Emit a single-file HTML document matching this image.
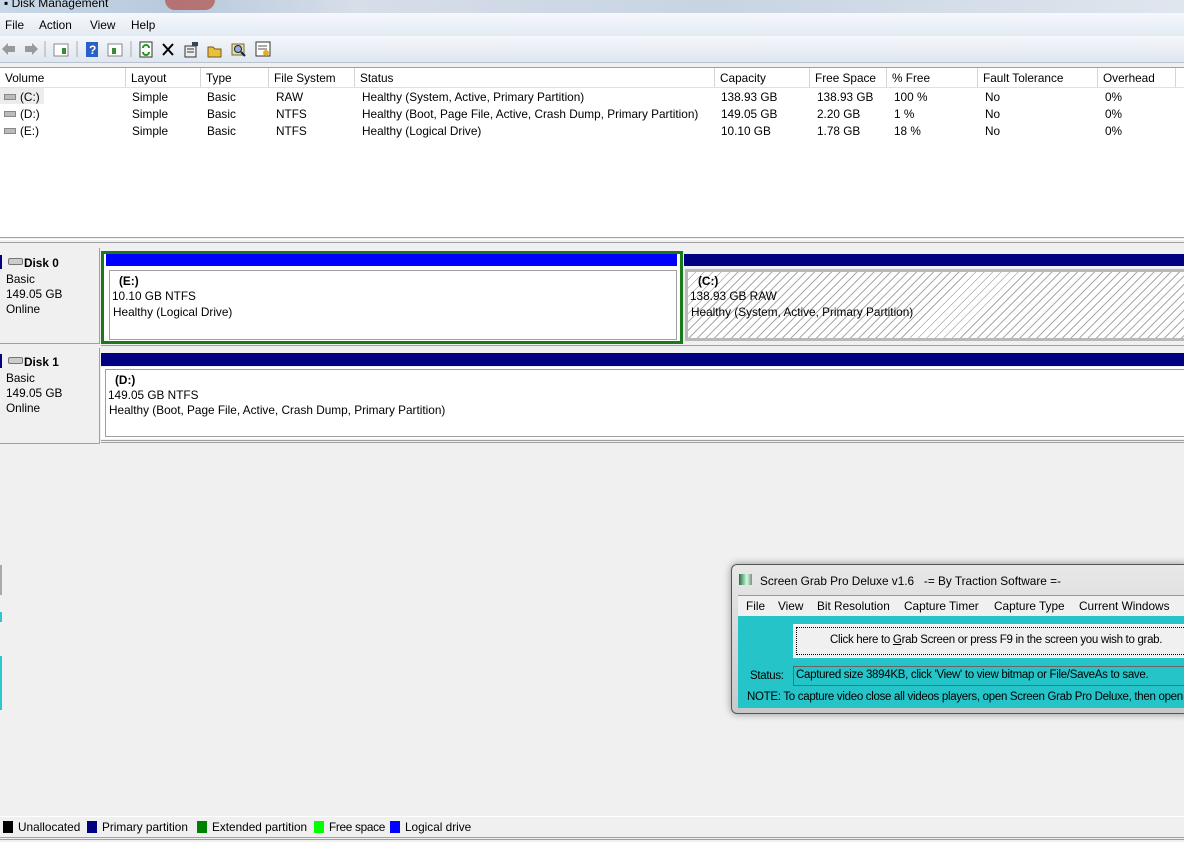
<!DOCTYPE html>
<html><head><meta charset="utf-8"><style>
*{margin:0;padding:0;box-sizing:border-box}
body{width:1184px;height:842px;overflow:hidden;background:#f0f0f0;font-family:"Liberation Sans",sans-serif;font-size:11.8px;color:#000;position:relative}
.a{position:absolute;white-space:nowrap}
.hd{position:absolute;top:68px;height:19px;border-right:1px solid #d5d5d5;padding:3px 0 0 5px;background:#fff}
.c{position:absolute}
.sg{font-size:11.5px;letter-spacing:-0.3px}
</style></head><body>
<div class="a" style="left:0;top:0;width:1184px;height:13px;background:linear-gradient(90deg,#c9d8e8,#b8c9dc 15%,#d6dee8 30%,#c8d4e2 60%,#dfe6ee)"></div>
<div class="a" style="left:165px;top:0;width:50px;height:10px;background:#b0392f;border-radius:0 0 25px 25px;opacity:.6"></div>
<div class="a" style="left:4px;top:-4px;font-size:12px">▪ Disk Management</div>
<div class="a" style="left:0;top:13px;width:1184px;height:23px;background:linear-gradient(#f5f8fc,#e3eaf3)"></div>
<div class="a" style="left:5px;top:18px">File</div>
<div class="a" style="left:39px;top:18px">Action</div>
<div class="a" style="left:90px;top:18px">View</div>
<div class="a" style="left:131px;top:18px">Help</div>
<div class="a" style="left:0;top:36px;width:1184px;height:27px;background:linear-gradient(#f4f7fb,#dfe6ef);border-bottom:1px solid #b9c3cf"></div>
<svg class="a" style="left:0;top:38px" width="280" height="22">
<path d="M2 11 L8 5 V8 H15 V14 H8 V17Z" fill="#9a9a9a"/>
<path d="M38 11 L32 5 V8 H25 V14 H32 V17Z" fill="#9a9a9a"/>
<line x1="45" y1="3" x2="45" y2="19" stroke="#aaa"/>
<rect x="54" y="6" width="14" height="12" fill="#fff" stroke="#888"/><rect x="62" y="10" width="4" height="6" fill="#3a8a3a"/>
<line x1="77" y1="3" x2="77" y2="19" stroke="#aaa"/>
<rect x="86" y="4" width="12" height="15" fill="#2b5fc8"/><text x="89" y="16" fill="#fff" font-size="12" font-weight="bold" font-family="Liberation Sans">?</text>
<rect x="108" y="6" width="14" height="12" fill="#fff" stroke="#888"/><rect x="112" y="10" width="4" height="6" fill="#3a8a3a"/>
<line x1="131" y1="3" x2="131" y2="19" stroke="#aaa"/>
<rect x="140" y="4" width="12" height="15" fill="#fff" stroke="#333"/><path d="M143 10 A3 3 0 0 1 149 10 M149 14 A3 3 0 0 1 143 14" stroke="#1a9a1a" stroke-width="2" fill="none"/>
<path d="M163 6 L173 17 M173 6 L163 17" stroke="#000" stroke-width="2"/>
<rect x="185" y="8" width="11" height="11" fill="#eee" stroke="#333"/><path d="M187 11h7M187 14h7" stroke="#333"/><rect x="192" y="4" width="6" height="4" fill="#345"/>
<path d="M208 9h5l2 2h6v8h-13z" fill="#e8c040" stroke="#7a5a10"/>
<rect x="232" y="6" width="12" height="11" fill="#e6d9a0" stroke="#7a6a30"/><circle cx="238" cy="11" r="3.5" fill="#9ad" stroke="#124"/><path d="M241 14l4 4" stroke="#124" stroke-width="2"/>
<rect x="256" y="4" width="14" height="14" fill="#fff" stroke="#333"/><path d="M258 8h9M258 11h9" stroke="#555"/><circle cx="266" cy="15" r="3" fill="#e0b020"/>
</svg>
<div class="a" style="left:0;top:67px;width:1184px;height:170px;background:#fff;border-top:1px solid #a0a0a0"></div>
<div class="hd" style="left:0;width:126px">Volume</div>
<div class="hd" style="left:126px;width:75px">Layout</div>
<div class="hd" style="left:201px;width:68px">Type</div>
<div class="hd" style="left:269px;width:86px">File System</div>
<div class="hd" style="left:355px;width:360px">Status</div>
<div class="hd" style="left:715px;width:95px">Capacity</div>
<div class="hd" style="left:810px;width:77px">Free Space</div>
<div class="hd" style="left:887px;width:91px">% Free</div>
<div class="hd" style="left:978px;width:120px">Fault Tolerance</div>
<div class="hd" style="left:1098px;width:78px">Overhead</div>
<div class="a" style="left:0;top:87px;width:1184px;height:1px;background:#e0e0e0"></div>
<div class="a" style="left:0;top:88px;width:44px;height:16px;background:#ececec"></div>
<div class="c" style="left:0;top:90px;font-size:12px;line-height:17px">
<div class="a" style="left:4px;top:4px;width:12px;height:6px;background:#bbb;border:1px solid #888"></div>
<div class="a" style="left:4px;top:21px;width:12px;height:6px;background:#bbb;border:1px solid #888"></div>
<div class="a" style="left:4px;top:38px;width:12px;height:6px;background:#bbb;border:1px solid #888"></div>
</div>
<div class="a" style="left:20px;top:89px;line-height:17px">(C:)<br>(D:)<br>(E:)</div>
<div class="a" style="left:132px;top:89px;line-height:17px">Simple<br>Simple<br>Simple</div>
<div class="a" style="left:207px;top:89px;line-height:17px">Basic<br>Basic<br>Basic</div>
<div class="a" style="left:276px;top:89px;line-height:17px">RAW<br>NTFS<br>NTFS</div>
<div class="a" style="left:362px;top:89px;line-height:17px">Healthy (System, Active, Primary Partition)<br>Healthy (Boot, Page File, Active, Crash Dump, Primary Partition)<br>Healthy (Logical Drive)</div>
<div class="a" style="left:721px;top:89px;line-height:17px">138.93 GB<br>149.05 GB<br>10.10 GB</div>
<div class="a" style="left:817px;top:89px;line-height:17px">138.93 GB<br>2.20 GB<br>1.78 GB</div>
<div class="a" style="left:894px;top:89px;line-height:17px">100 %<br>1 %<br>18 %</div>
<div class="a" style="left:985px;top:89px;line-height:17px">No<br>No<br>No</div>
<div class="a" style="left:1105px;top:89px;line-height:17px">0%<br>0%<br>0%</div>
<div class="a" style="left:0;top:237px;width:1184px;height:3px;border-top:1px solid #a0a0a0;border-bottom:1px solid #fff"></div>
<div class="a" style="left:0;top:242px;width:1184px;height:1px;background:#a0a0a0"></div>
<div class="a" style="left:0;top:248px;width:100px;height:96px;background:#f0f0f0;border-right:1px solid #a0a0a0;border-bottom:1px solid #a0a0a0"></div>
<div class="a" style="left:0;top:255px;width:2px;height:14px;background:#000080"></div>
<div class="a" style="left:8px;top:258px;width:15px;height:7px;background:#ccc;border:1px solid #777;border-radius:2px"></div>
<div class="a" style="left:24px;top:256px;font-weight:bold">Disk 0</div>
<div class="a" style="left:6px;top:272px;line-height:15px">Basic<br>149.05 GB<br>Online</div>
<div class="a" style="left:101px;top:251px;width:582px;height:93px;border:3px solid #1a7a1a;background:#fff"></div>
<div class="a" style="left:106px;top:254px;width:571px;height:12px;background:#0000ff"></div>
<div class="a" style="left:109px;top:270px;width:568px;height:70px;border:1px solid #a0a0a0"></div>
<div class="a" style="left:119px;top:274px;font-weight:bold">(E:)</div>
<div class="a" style="left:112px;top:289px">10.10 GB NTFS</div>
<div class="a" style="left:113px;top:305px">Healthy (Logical Drive)</div>
<div class="a" style="left:684px;top:254px;width:500px;height:12px;background:#000080"></div>
<div class="a" style="left:685px;top:269px;width:499px;height:72px;border:3px solid #b8b8b8;border-right:none;background:repeating-linear-gradient(135deg,#fff 0 5px,#aaa 5px 6px)"></div>
<div class="a" style="left:698px;top:274px;font-weight:bold">(C:)</div>
<div class="a" style="left:690px;top:289px">138.93 GB RAW</div>
<div class="a" style="left:691px;top:305px">Healthy (System, Active, Primary Partition)</div>
<div class="a" style="left:101px;top:345px;width:1083px;height:1px;background:#a0a0a0"></div>
<div class="a" style="left:0;top:348px;width:100px;height:96px;background:#f0f0f0;border-right:1px solid #a0a0a0;border-bottom:1px solid #a0a0a0"></div>
<div class="a" style="left:0;top:354px;width:2px;height:14px;background:#000080"></div>
<div class="a" style="left:8px;top:357px;width:15px;height:7px;background:#ccc;border:1px solid #777;border-radius:2px"></div>
<div class="a" style="left:24px;top:355px;font-weight:bold">Disk 1</div>
<div class="a" style="left:6px;top:371px;line-height:15px">Basic<br>149.05 GB<br>Online</div>
<div class="a" style="left:101px;top:353px;width:1083px;height:13px;background:#000080"></div>
<div class="a" style="left:101px;top:367px;width:1083px;height:72px;background:#fff"></div>
<div class="a" style="left:105px;top:369px;width:1079px;height:68px;border:1px solid #a0a0a0;border-right:none"></div>
<div class="a" style="left:115px;top:373px;font-weight:bold">(D:)</div>
<div class="a" style="left:108px;top:388px">149.05 GB NTFS</div>
<div class="a" style="left:109px;top:403px">Healthy (Boot, Page File, Active, Crash Dump, Primary Partition)</div>
<div class="a" style="left:101px;top:440px;width:1083px;height:3px;border-top:1px solid #a0a0a0;border-bottom:1px solid #a0a0a0"></div>
<div class="a" style="left:0;top:565px;width:2px;height:30px;background:#aaa"></div>
<div class="a" style="left:0;top:612px;width:2px;height:10px;background:#2cc8d0"></div>
<div class="a" style="left:0;top:656px;width:2px;height:54px;background:#2cc8d0"></div>
<div class="a" style="left:731px;top:564px;width:460px;height:150px;background:linear-gradient(#e8e8e8,#c8c8c8);border:1px solid #555;border-radius:6px;box-shadow:0 0 8px rgba(0,0,0,.4)"></div>
<div class="a" style="left:739px;top:574px;width:13px;height:11px;background:linear-gradient(90deg,#2a6a4a,#cfd 60%,#888)"></div>
<div class="a" style="left:760px;top:574px">Screen Grab Pro Deluxe v1.6&nbsp;&nbsp; -= By Traction Software =-</div>
<div class="a" style="left:738px;top:595px;width:446px;height:21px;background:#f0f0f0;border-top:1px solid #999"></div>
<div class="a" style="left:746px;top:599px">File</div>
<div class="a" style="left:778px;top:599px">View</div>
<div class="a" style="left:817px;top:599px">Bit Resolution</div>
<div class="a" style="left:904px;top:599px">Capture Timer</div>
<div class="a" style="left:994px;top:599px">Capture Type</div>
<div class="a" style="left:1079px;top:599px">Current Windows</div>
<div class="a" style="left:738px;top:616px;width:446px;height:92px;background:#25c4c9"></div>
<div class="a" style="left:793px;top:624px;width:391px;height:34px;background:#f0f0f0;border:1px solid #fff;border-right:none"></div>
<div class="a" style="left:796px;top:627px;width:388px;height:28px;border:1px dotted #000;border-right:none"></div>
<div class="a sg" style="left:830px;top:634px">Click here to <u>G</u>rab Screen or press F9 in the screen you wish to grab.</div>
<div class="a sg" style="left:750px;top:670px">Status:</div>
<div class="a" style="left:793px;top:666px;width:391px;height:20px;border:1px solid #666;border-right:none;background:#25c4c9"></div>
<div class="a sg" style="left:796px;top:669px">Captured size 3894KB, click 'View' to view bitmap or File/SaveAs to save.</div>
<div class="a sg" style="left:747px;top:691px">NOTE: To capture video close all videos players, open Screen Grab Pro Deluxe, then open v</div>
<div class="a" style="left:0;top:816px;width:1184px;height:1px;background:#fff"></div>
<div class="a" style="left:3px;top:821px;width:10px;height:12px;background:#000"></div>
<div class="a" style="left:18px;top:820px">Unallocated</div>
<div class="a" style="left:87px;top:821px;width:10px;height:12px;background:#000080"></div>
<div class="a" style="left:102px;top:820px">Primary partition</div>
<div class="a" style="left:197px;top:821px;width:10px;height:12px;background:#008000"></div>
<div class="a" style="left:212px;top:820px">Extended partition</div>
<div class="a" style="left:314px;top:821px;width:10px;height:12px;background:#00ff00"></div>
<div class="a" style="left:329px;top:820px;letter-spacing:-0.3px">Free space</div>
<div class="a" style="left:390px;top:821px;width:10px;height:12px;background:#0000ff"></div>
<div class="a" style="left:405px;top:820px">Logical drive</div>
<div class="a" style="left:0;top:837px;width:1184px;height:3px;border-top:1px solid #a0a0a0;border-bottom:1px solid #a0a0a0"></div>
</body></html>
